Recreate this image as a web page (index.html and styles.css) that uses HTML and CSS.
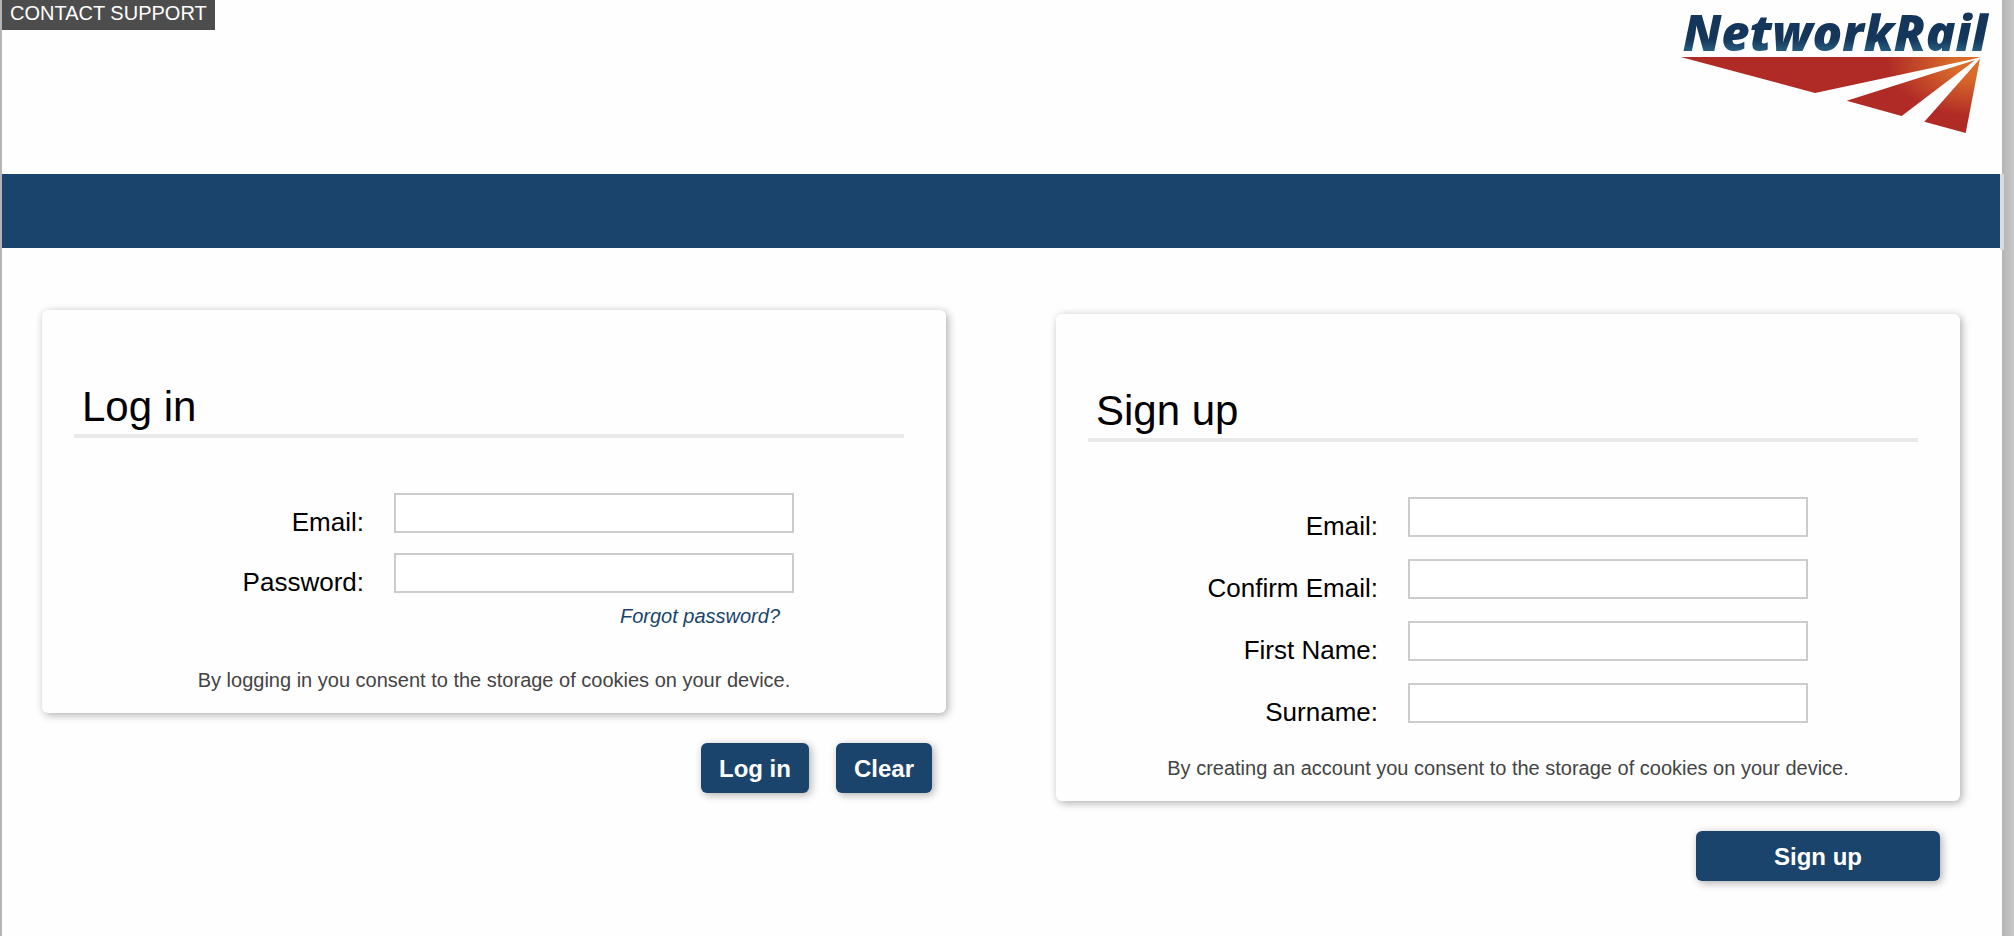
FILE: index.html
```html
<!DOCTYPE html>
<html lang="en">
<head>
<meta charset="utf-8">
<title>Network Rail - Log in</title>
<link rel="stylesheet" href="styles.css">
</head>
<body>
<div class="page">
  <header class="header">
    <a class="support" href="#">CONTACT SUPPORT</a>
    <svg class="logo" viewBox="60 0 948 402" role="img" aria-label="NetworkRail">
      <defs>
        <linearGradient id="ink" x1="0" y1="0" x2="0" y2="1">
          <stop offset="0.6" stop-color="#14365a"/>
          <stop offset="0.82" stop-color="#2a6586"/>
        </linearGradient>
        <radialGradient id="glow" gradientUnits="userSpaceOnUse" cx="950" cy="190" r="270" gradientTransform="translate(0 76) scale(1 0.6)">
          <stop offset="0.25" stop-color="#d96c2b"/>
          <stop offset="1" stop-color="#b02a26"/>
        </radialGradient>
      </defs>
      <text class="logo-text" x="68" y="154" fill="url(#ink)">NetworkRail</text>
      <g fill="url(#glow)">
        <path d="M62 171H963L930 179L465 279Z"/>
        <path d="M560 302L946 180L725 348Z"/>
        <path d="M793 365L960 176L917 399Z"/>
      </g>
    </svg>
  </header>
  <nav class="bar" aria-label="Main"></nav>
  <main class="columns">
    <form class="column">
      <section class="card">
        <h1 class="title">Log in</h1>
        <div class="fields">
          <label for="login-email">Email:</label>
          <input id="login-email" type="email">
          <label for="login-password">Password:</label>
          <input id="login-password" type="password">
        </div>
        <div class="forgot"><a href="#">Forgot password?</a></div>
        <p class="notice">By logging in you consent to the storage of cookies on your device.</p>
      </section>
      <div class="actions">
        <button type="submit">Log in</button>
        <button type="reset">Clear</button>
      </div>
    </form>
    <form class="column signup">
      <section class="card">
        <h1 class="title">Sign up</h1>
        <div class="fields">
          <label for="email">Email:</label>
          <input id="email" type="email">
          <label for="confirm">Confirm Email:</label>
          <input id="confirm" type="email">
          <label for="first">First Name:</label>
          <input id="first" type="text">
          <label for="surname">Surname:</label>
          <input id="surname" type="text">
        </div>
        <p class="notice">By creating an account you consent to the storage of cookies on your device.</p>
      </section>
      <div class="actions">
        <button type="submit">Sign up</button>
      </div>
    </form>
  </main>
</div>
</body>
</html>
```
FILE: styles.css
```css
* {
  box-sizing: border-box;
}

body {
  margin: 0;
  padding: 0 12px 0 2px;
  background: linear-gradient(to left, #c8c8c8, #b4b4b4 12px);
  color: #000;
  font-family: "Helvetica Neue", "Liberation Sans", Arial, sans-serif;
}

.page {
  min-height: 100vh;
  background: #fefefe;
}

.header {
  display: flex;
  justify-content: space-between;
  align-items: flex-start;
  height: 174px;
  padding-right: 6px;
}

.support {
  padding: 0 8px 4px;
  background: #4d4d4d;
  color: #fff;
  font-size: 20px;
  line-height: 26px;
  text-decoration: none;
}

.logo {
  width: 316px;
  height: 134px;
  overflow: visible;
}

.logo-text {
  font: italic 800 147px "Open Sans", "Noto Sans", sans-serif;
}

.bar {
  position: relative;
  height: 74px;
  margin-right: 2px;
  background: #1a446c;
}

.bar::after {
  content: "";
  position: absolute;
  top: 0;
  right: -4px;
  width: 4px;
  height: 76px;
  background: #dcdcdc;
}

.columns {
  display: grid;
  grid-template-columns: 1fr 1fr;
  gap: 110px;
  padding: 62px 42px 40px 40px;
}

.signup {
  padding-top: 4px;
}

.card {
  padding: 70px 0 20px;
  border-radius: 6px;
  background: #fefefe;
  box-shadow: 2px 2px 8px rgba(0, 0, 0, 0.32);
}

.title {
  margin: 0 42px 55px 32px;
  padding: 0 8px;
  border-bottom: 4px solid #e9e9e9;
  font-size: 42px;
  font-weight: 300;
  line-height: 54px;
}

.fields {
  display: grid;
  grid-template-columns: 29fr 40fr 8fr;
  gap: 20px 30px;
  margin: 0 42px 0 32px;
}

.signup .fields {
  row-gap: 22px;
}

.fields label {
  grid-column: 1;
  padding-top: 18px;
  font-size: 26px;
  line-height: 22px;
  text-align: right;
}

.fields input {
  grid-column: 2;
  width: 100%;
  height: 40px;
  padding: 0 8px;
  border: 2px solid #ccc;
  border-radius: 0;
  background: #fff;
  font: inherit;
  font-size: 24px;
}

.forgot {
  margin: 11px 166px 40px 0;
  font-size: 20px;
  font-style: italic;
  line-height: 24px;
  text-align: right;
}

.forgot a {
  color: #1a446c;
  text-decoration: none;
}

.notice {
  margin: 0;
  color: #444;
  font-size: 20px;
  line-height: 25px;
  text-align: center;
}

.signup .notice {
  margin-top: 33px;
}

.actions {
  display: flex;
  justify-content: flex-end;
  gap: 27px;
  padding: 30px 14px 0 0;
}

.signup .actions {
  padding-right: 20px;
}

.actions button {
  height: 50px;
  padding: 2px 18px 0;
  border: 0;
  border-radius: 6px;
  background: #1a446c;
  box-shadow: 2px 2px 8px rgba(0, 0, 0, 0.32);
  color: #fff;
  font: inherit;
  font-size: 24px;
  font-weight: 700;
}

.signup .actions button {
  width: 244px;
}
```
